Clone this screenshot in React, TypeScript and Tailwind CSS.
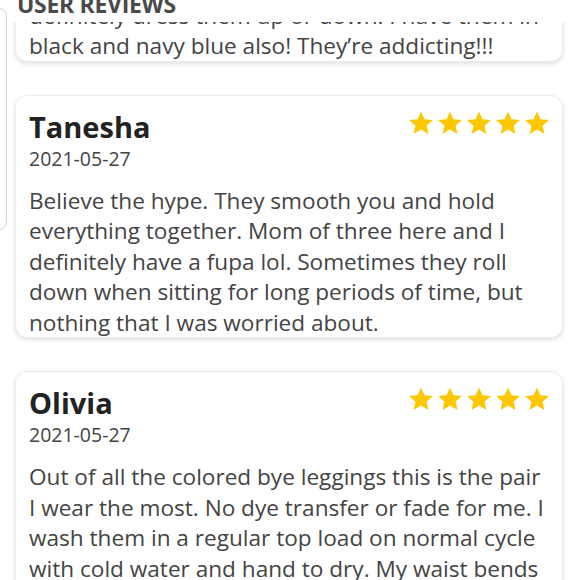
import React from 'react'

const reviews = [
  {
    name: 'Tanesha',
    date: '2021-05-27',
    text: 'Believe the hype. They smooth you and hold everything together. Mom of three here and I definitely have a fupa lol. Sometimes they roll down when sitting for long periods of time, but nothing that I was worried about.',
  },
  {
    name: 'Olivia',
    date: '2021-05-27',
    text: 'Out of all the colored bye leggings this is the pair I wear the most. No dye transfer or fade for me. I wash them in a regular top load on normal cycle with cold water and hand to dry. My waist bends a little but they still hold up great.',
  },
]

function Star() {
  return (
    <svg viewBox="0 0 24 24" className="w-[26px] h-[26px]" fill="#fdc700">
      <path d="M12 1.4l3.2 7.2 7.8.7-5.9 5.2 1.8 7.7L12 18.1l-6.9 4.1 1.8-7.7-5.9-5.2 7.8-.7z" />
    </svg>
  )
}

function Stars() {
  return (
    <div className="flex gap-[3px] pt-[1px]">
      <Star />
      <Star />
      <Star />
      <Star />
      <Star />
    </div>
  )
}

function ReviewCard({ name, date, text }: { name: string; date: string; text: string }) {
  return (
    <div className="bg-white rounded-[12px] border border-[#ececec] shadow-[0_2px_4px_rgba(0,0,0,0.12)] pl-[13px] pr-[12px] pt-[13px]">
      <div className="flex justify-between items-start">
        <div className="text-[29px] leading-[36px] font-bold text-[#222]">{name}</div>
        <Stars />
      </div>
      <div className="text-[19.5px] leading-[28px] text-[#444]">{date}</div>
      <p className="text-[22.6px] leading-[30.5px] text-[#444] mt-[13px] mb-[-1px]">{text}</p>
    </div>
  )
}

export default function App() {
  return (
    <div className="relative w-[580px] h-[580px] overflow-hidden bg-white" style={{ fontFamily: '"Open Sans", sans-serif' }}>
      {/* edge of the panel behind */}
      <div className="absolute left-[-20px] top-[8px] w-[27px] h-[222px] rounded-[8px] border border-[#d4d4d4] z-20" />

      {/* sticky section header */}
      <div className="absolute left-[8px] top-0 right-0 h-[22px] bg-white z-10 overflow-hidden">
        <div className="pl-[9px] mt-[-7px] text-[23px] leading-[23px] font-bold text-[#4a4a4a] tracking-[-0.3px]">USER REVIEWS</div>
      </div>

      <div className="pl-[15px] pr-[17px] mt-[-44px] flex flex-col gap-[33px]">
        <div className="bg-white rounded-[12px] border border-[#ececec] shadow-[0_2px_4px_rgba(0,0,0,0.12)] pl-[13px] pr-[12px] pt-[13px]">
          <p className="text-[22.6px] leading-[30.5px] text-[#444] mb-[-1px]">
            So soft and flattering on. You can
            <br />
            definitely dress them up or down. I have them in
            <br />
            black and navy blue also! They’re addicting!!!
          </p>
        </div>
        {reviews.map((r) => (
          <ReviewCard key={r.name} {...r} />
        ))}
      </div>
    </div>
  )
}
